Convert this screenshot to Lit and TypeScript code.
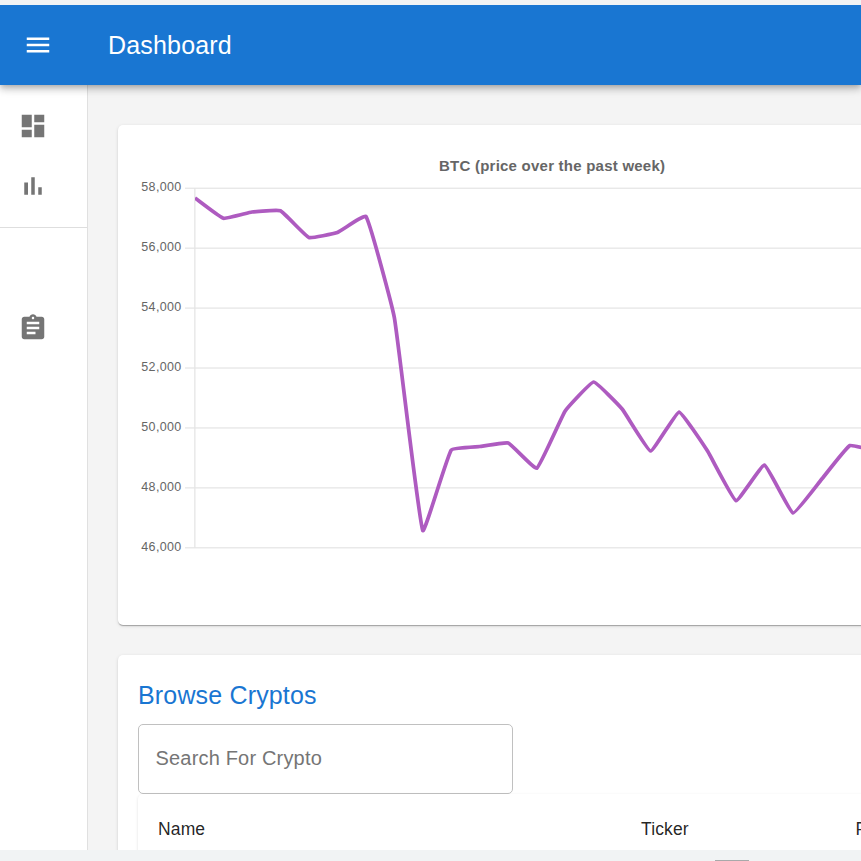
import { LitElement, html, svg, css } from "lit";
import { customElement } from "lit/decorators.js";

type Point = { x: number; y: number };

const TICKS = ["58,000", "56,000", "54,000", "52,000", "50,000", "48,000", "46,000"];
const AXIS_X = 77;
const AXIS_TOP = 63;
const TICK_STEP = 59.93;
const POINT_STEP = 28.475;

/* Vertical position of every price sample inside the plot */
const SAMPLES = [
  73, 93.3, 87, 85.8, 112.5, 107.5, 91.3, 192.5, 405.5, 325, 321.5, 318, 343.3, 286, 257,
  284, 326, 287, 326, 375.6, 340.1, 388, 354.5, 320.5, 327,
];

/* Cubic spline whose handles are weighted by distance to the neighbours */
function splinePath(points: Point[], tension: number): string {
  const handles = points.map((p, i) => {
    const a = points[Math.max(i - 1, 0)];
    const b = points[Math.min(i + 1, points.length - 1)];
    const d0 = Math.hypot(p.x - a.x, p.y - a.y);
    const d1 = Math.hypot(b.x - p.x, b.y - p.y);
    const k0 = (tension * d0) / (d0 + d1);
    const k1 = (tension * d1) / (d0 + d1);
    return {
      before: { x: p.x - k0 * (b.x - a.x), y: p.y - k0 * (b.y - a.y) },
      after: { x: p.x + k1 * (b.x - a.x), y: p.y + k1 * (b.y - a.y) },
    };
  });
  let d = `M${points[0].x} ${points[0].y}`;
  for (let i = 1; i < points.length; i++) {
    const c1 = handles[i - 1].after;
    const c2 = handles[i].before;
    d += `C${c1.x} ${c1.y} ${c2.x} ${c2.y} ${points[i].x} ${points[i].y}`;
  }
  return d;
}

@customElement("price-chart")
class PriceChart extends LitElement {
  static styles = css`
    :host { display: block; width: 868px; height: 500px; }
    .plot { display: block; }
    .title { font: bold 15px "Liberation Sans", Arial, sans-serif; fill: #666; }
    .tick { font: 12.5px "Liberation Sans", Arial, sans-serif; fill: #666; }
    .grid { fill: #e5e5e5; }
    .line { fill: none; stroke: #ae5bc0; stroke-width: 3.75; }
  `;

  render() {
    const points = SAMPLES.map((y, i) => ({ x: AXIS_X + i * POINT_STEP, y }));
    return html`
      <svg class="plot" width="868" height="500" viewBox="0 0 868 500">
        <defs>
          <clipPath id="area"><rect x=${AXIS_X} y="53" width="791" height="380"></rect></clipPath>
        </defs>
        <text class="title" x="321" y="45.5" textLength="226">BTC (price over the past week)</text>
        <rect class="grid" x="76.2" y=${AXIS_TOP} width="1.3" height="360"></rect>
        ${TICKS.map((label, i) => {
          const y = AXIS_TOP + i * TICK_STEP;
          return svg`
            <rect class="grid" x="67" y=${y - 0.4} width="801" height="1.25"></rect>
            <text class="tick" x="23.3" y=${AXIS_TOP + i * 60 + 3} textLength="40">${label}</text>`;
        })}
        <path class="line" clip-path="url(#area)" d=${splinePath(points, 0.1)}></path>
      </svg>
    `;
  }
}

@customElement("app-root")
class AppRoot extends LitElement {
  static styles = css`
    :host {
      display: flex;
      flex-direction: column;
      box-sizing: border-box;
      width: 861px;
      height: 861px;
      padding-top: 5px;
      overflow: hidden;
      background: #f1f3f4;
      font-family: "Liberation Sans", Arial, sans-serif;
    }
    .bar {
      flex: none;
      display: flex;
      align-items: center;
      height: 80px;
      padding-left: 23px;
      gap: 55px;
      background: #1976d2;
      color: #fff;
      position: relative;
      z-index: 1;
      clip-path: inset(0 0 -20px 0);
      box-shadow: 0 2.5px 5px -1.25px rgba(0, 0, 0, 0.2), 0 5px 6.25px 0 rgba(0, 0, 0, 0.14),
        0 1.25px 12.5px 0 rgba(0, 0, 0, 0.12);
    }
    .icon { display: block; flex: none; width: 30px; height: 30px; fill: currentColor; }
    .bar .icon { margin-left: -0.4px; margin-right: 0.4px; }
    .heading { margin: 0; font-size: 25px; line-height: 40px; font-weight: 400; letter-spacing: 0.18px; }
    .body { flex: none; display: flex; height: 765px; overflow: hidden; background: #f4f4f4; }
    .side {
      flex: none;
      box-sizing: border-box;
      width: 88px;
      border-right: 1px solid #e0e0e0;
      background: #fff;
      color: #757575;
    }
    .group { display: flex; flex-direction: column; gap: 30px; padding: 26px 0 26px 18px; }
    .group.second { padding-top: 85px; }
    .rule { height: 1px; background: #dedede; }
    .main { flex: none; display: flex; flex-direction: column; gap: 30px; padding: 40px 0 0 30px; width: 868px; }
    .card {
      flex: none;
      background: #fff;
      border-radius: 5px;
      box-shadow: 0 2px 1px -1px rgba(0, 0, 0, 0.16), 0 1px 1px 0 rgba(0, 0, 0, 0.14),
        0 1px 3.75px 0 rgba(0, 0, 0, 0.12);
    }
    .browse { box-sizing: border-box; height: 300px; padding: 20px; }
    .subtitle { margin: 0; color: #1976d2; font-size: 25px; line-height: 40px; font-weight: 400; letter-spacing: 0.16px; }
    .search {
      box-sizing: border-box;
      display: flex;
      align-items: center;
      width: 375px;
      height: 70px;
      margin-top: 9px;
      padding: 0 16.5px 2px;
      border: 1px solid #c0c0c0;
      border-radius: 5px;
      color: #757575;
      font-size: 20px;
      letter-spacing: 0.18px;
    }
    .table {
      display: grid;
      grid-template-columns: 483px 214.6px 120px;
      padding: 20px;
      height: 150px;
      border-radius: 5px;
      box-shadow: 0 1px 3px rgba(0, 0, 0, 0.12);
      color: rgba(0, 0, 0, 0.87);
      font-size: 17.5px;
      line-height: 30px;
      letter-spacing: 0.14px;
    }
    .foot { flex: 1; display: flex; align-items: flex-end; padding-left: 715px; }
    .thumb { width: 34px; height: 1px; background: #a8a9aa; }
  `;

  render() {
    return html`
      <header class="bar">
        <svg class="icon" viewBox="0 0 24 24"><path d="M3 18h18v-2H3v2zm0-5h18v-2H3v2zm0-7v2h18V6H3z"></path></svg>
        <h1 class="heading">Dashboard</h1>
      </header>
      <div class="body">
        <nav class="side">
          <div class="group">
            <svg class="icon" viewBox="0 0 24 24"><path d="M3 13h8V3H3v10zm0 8h8v-6H3v6zm10 0h8V11h-8v10zm0-18v6h8V3h-8z"></path></svg>
            <svg class="icon" viewBox="0 0 24 24"><path d="M5 9.2h3V19H5zM10.6 5h2.8v14h-2.8zm5.6 8H19v6h-2.8z"></path></svg>
          </div>
          <div class="rule"></div>
          <div class="group second">
            <svg class="icon" viewBox="0 0 24 24"><path d="M19 3h-4.18C14.4 1.84 13.3 1 12 1c-1.3 0-2.4.84-2.82 2H5c-1.1 0-2 .9-2 2v14c0 1.1.9 2 2 2h14c1.1 0 2-.9 2-2V5c0-1.1-.9-2-2-2zm-7 0c.55 0 1 .45 1 1s-.45 1-1 1-1-.45-1-1 .45-1 1-1zm2 14H7v-2h7v2zm3-4H7v-2h10v2zm0-4H7V7h10v2z"></path></svg>
          </div>
        </nav>
        <main class="main">
          <section class="card"><price-chart></price-chart></section>
          <section class="card browse">
            <h2 class="subtitle">Browse Cryptos</h2>
            <div class="search">Search For Crypto</div>
            <div class="table"><span>Name</span><span>Ticker</span><span>Price</span></div>
          </section>
        </main>
      </div>
      <footer class="foot"><div class="thumb"></div></footer>
    `;
  }
}
